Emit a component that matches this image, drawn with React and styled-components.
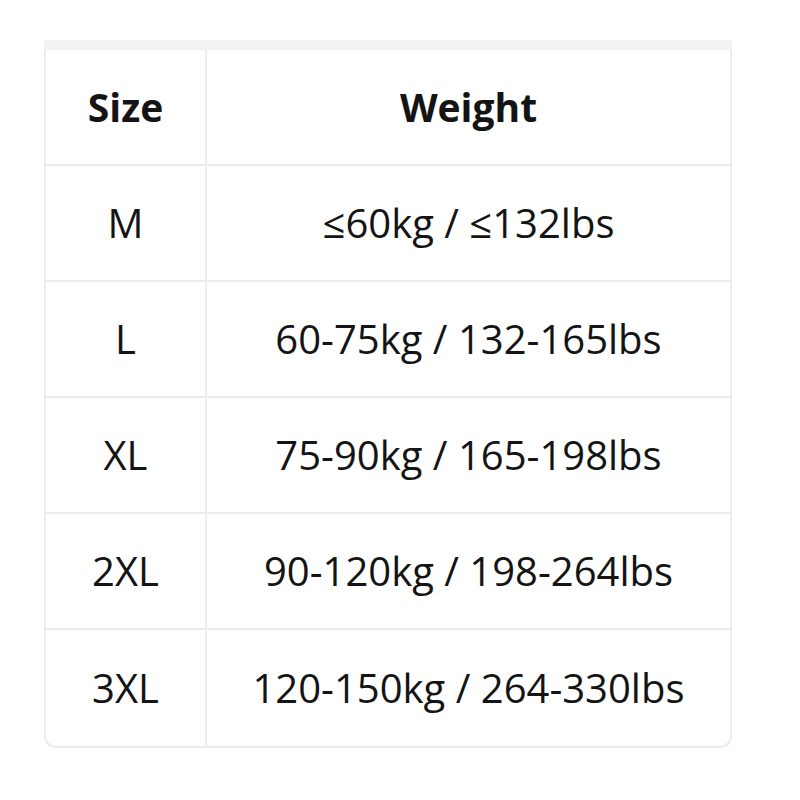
import React from "react";
import styled, { createGlobalStyle } from "styled-components";

const GlobalStyle = createGlobalStyle`
  body {
    margin: 0;
    background: #ffffff;
    font-family: "Open Sans", "Noto Sans", sans-serif;
    color: #141414;
  }
`;

const Page = styled.div`
  padding: 40px 0 0 44px;
`;

const Card = styled.div`
  width: 688px;
`;

const TopStrip = styled.div`
  height: 10px;
  background: #f2f2f2;
`;

const Table = styled.div`
  display: grid;
  grid-template-columns: 161px 1fr;
  grid-auto-rows: 116px;
  border: 2px solid #ececec;
  border-top: none;
  border-radius: 0 0 12px 12px;
  overflow: hidden;
`;

const Cell = styled.div`
  display: flex;
  align-items: center;
  justify-content: center;
  font-size: ${(props) => (props.head ? "39px" : "40px")};
  font-weight: ${(props) => (props.head ? 700 : 400)};
  border-bottom: ${(props) => (props.last ? "none" : "2px solid #ececec")};
  border-right: ${(props) => (props.first ? "2px solid #ececec" : "none")};
  padding-bottom: 2px;
`;

const rows = [
  ["M", "≤60kg / ≤132lbs"],
  ["L", "60-75kg / 132-165lbs"],
  ["XL", "75-90kg / 165-198lbs"],
  ["2XL", "90-120kg / 198-264lbs"],
  ["3XL", "120-150kg / 264-330lbs"],
];

export default function App() {
  return (
    <Page>
      <GlobalStyle />
      <Card>
        <TopStrip />
        <Table>
          <Cell head first>
            Size
          </Cell>
          <Cell head>Weight</Cell>
          {rows.map((row, i) => (
            <React.Fragment key={row[0]}>
              <Cell first last={i === rows.length - 1}>
                {row[0]}
              </Cell>
              <Cell last={i === rows.length - 1}>{row[1]}</Cell>
            </React.Fragment>
          ))}
        </Table>
      </Card>
    </Page>
  );
}
